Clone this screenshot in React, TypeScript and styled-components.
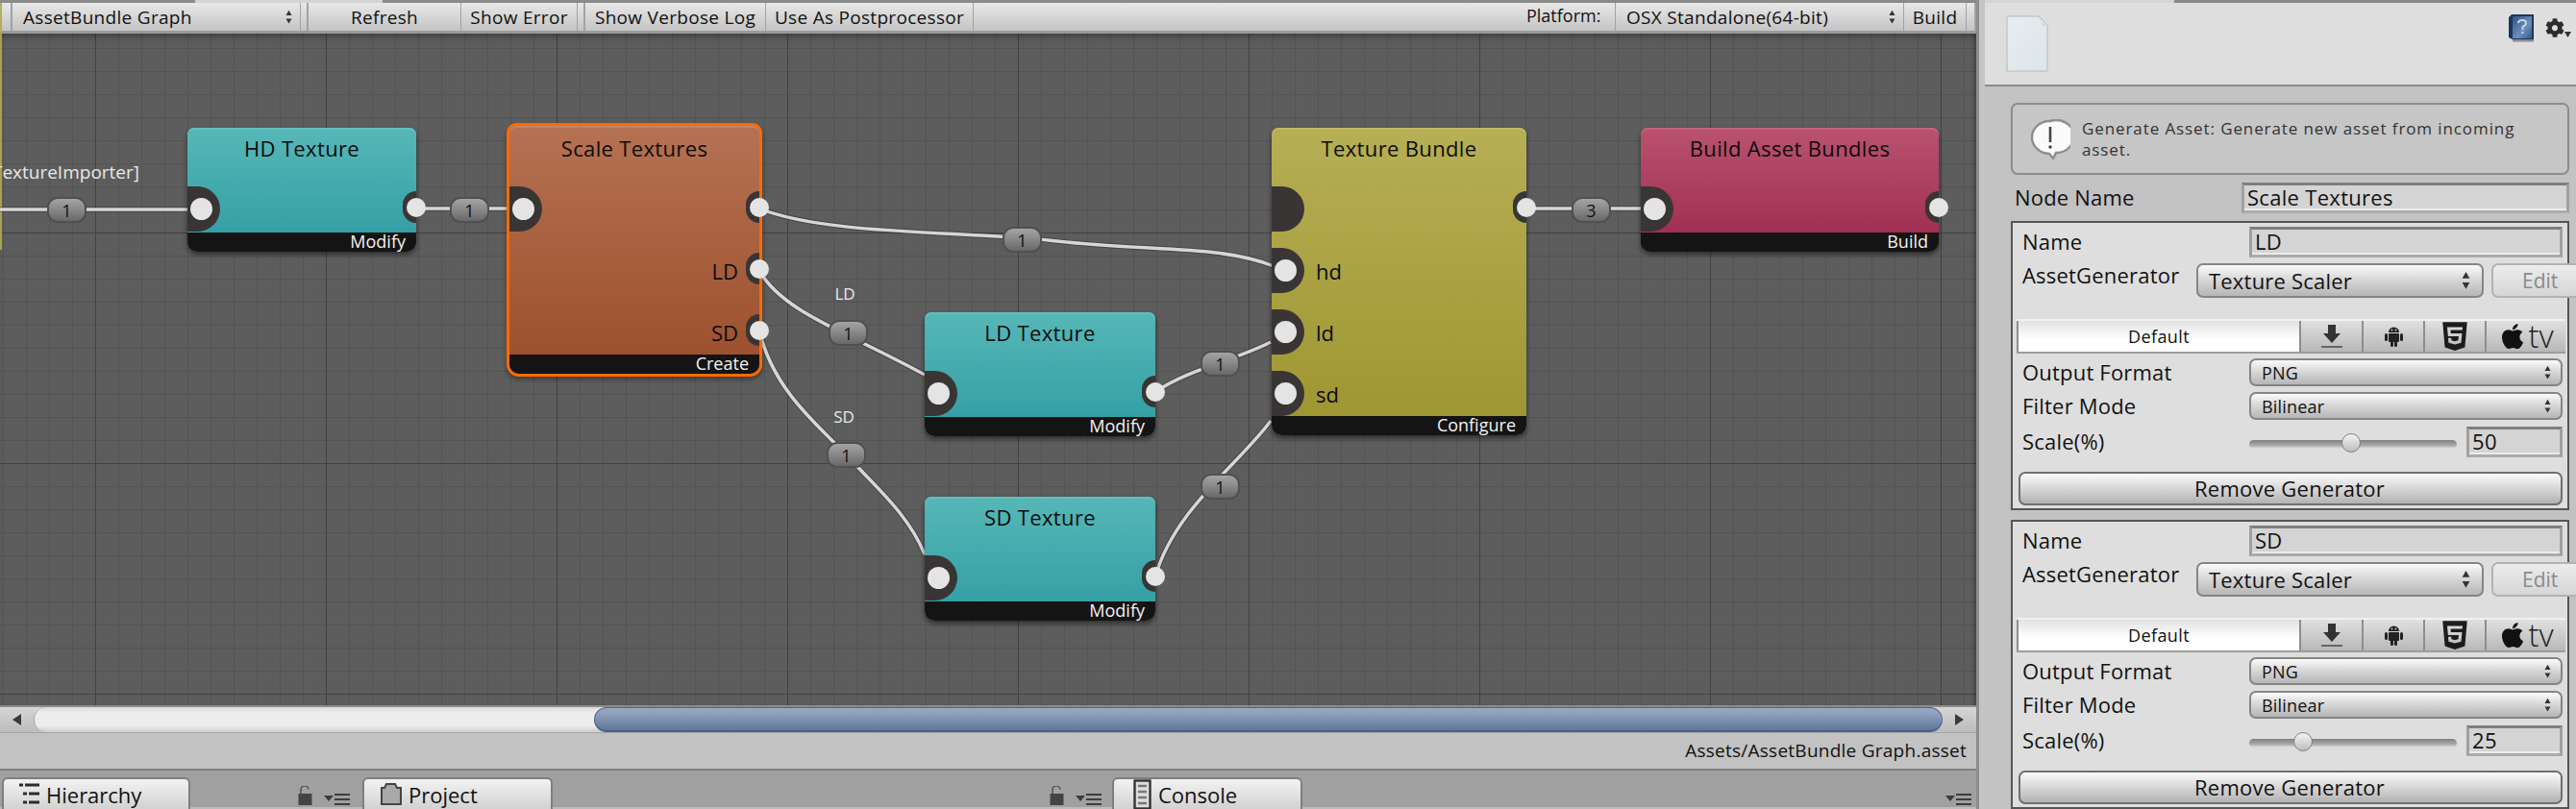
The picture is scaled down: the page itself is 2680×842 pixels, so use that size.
import React from "react";
import styled, { createGlobalStyle } from "styled-components";
import { FaApple, FaCog, FaHtml5 } from "react-icons/fa";

const FONT = `"Open Sans", "Noto Sans", "DejaVu Sans", sans-serif`;

const GlobalStyle = createGlobalStyle`
  html, body {
    margin: 0;
    width: 2680px;
    height: 842px;
    overflow: hidden;
    background: #c2c2c2;
    font-family: ${FONT};
    color: #111;
  }
  * { box-sizing: border-box; }
`;

const Page = styled.div`
  display: flex;
  width: 2680px;
  height: 842px;
  overflow: hidden;
`;

const Main = styled.div`
  width: 2056px;
  height: 842px;
  flex: none;
  display: flex;
  flex-direction: column;
`;

const Gutter = styled.div`
  width: 9px;
  flex: none;
  background: #c4c4c4;
  border-left: 3px solid #8c8c8c;
`;

const TopStrip = styled.div`
  height: 3px;
  flex: none;
  background: #8a8a8a;
  padding-left: ${(p) => p.$tabLeft}px;
  & > div {
    width: ${(p) => p.$tabWidth}px;
    height: 3px;
    background: #d4d4d4;
  }
`;

/* toolbar */
const Toolbar = styled.div`
  height: 32px;
  flex: none;
  display: flex;
  background: linear-gradient(#e8e8e8, #c4c4c4);
  border-bottom: 3px solid #9a9a9a;
  border-left: 2px solid #b3ad62;
  font-size: 19px;
  letter-spacing: 0.3px;
`;

const ToolItem = styled.div`
  width: ${(p) => p.$w}px;
  flex: none;
  display: flex;
  align-items: center;
  justify-content: ${(p) => (p.$left ? "space-between" : "center")};
  padding: ${(p) => (p.$left ? "0 8px 0 11px" : "0")};
  border-right: 1px solid #a2a2a2;
  white-space: nowrap;
`;

const ToolSpacer = styled.div`
  width: ${(p) => p.$w}px;
  flex: none;
  border-right: 2px solid #a2a2a2;
`;

const ToolFill = styled.div`
  flex: 1;
`;

const ToolLabel = styled.div`
  width: 93px;
  flex: none;
  border-right: 1px solid #a2a2a2;
  padding-bottom: 4px;
  display: flex;
  align-items: center;
  letter-spacing: 0;
  font-size: 18px;
`;

/* graph canvas */
const Canvas = styled.div`
  position: relative;
  flex: 1;
  min-height: 0;
  overflow: hidden;
  background-color: #5d5d5d;
  background-image:
    linear-gradient(to right, #414141 1px, transparent 1px),
    linear-gradient(to bottom, #414141 1px, transparent 1px),
    linear-gradient(to right, #545454 1px, transparent 1px),
    linear-gradient(to bottom, #545454 1px, transparent 1px);
  background-size: 240px 100%, 100% 240px, 24px 100%, 100% 24px;
  background-position: 99px 0, 0 207px, 3px 0, 0 15px;
  box-shadow: inset 0 9px 8px -7px rgba(0, 0, 0, 0.4), inset -5px 0 5px -4px rgba(0, 0, 0, 0.4);
  &::before {
    content: "";
    position: absolute;
    left: 0;
    top: 0;
    width: 2px;
    height: 225px;
    background: #a9a34a;
  }
`;

const EdgeLayer = styled.svg`
  position: absolute;
  left: 0;
  top: -35px;
  width: 2056px;
  height: 734px;
`;

const Pill = styled.div`
  position: absolute;
  left: ${(p) => p.$x - 20}px;
  top: ${(p) => p.$y - 35 - 13}px;
  width: 41px;
  height: 27px;
  border-radius: 11px;
  border: 2px solid #505050;
  background: linear-gradient(#a4a4a4, #8a8a8a 45%, #686868);
  display: flex;
  align-items: center;
  justify-content: center;
  font-size: 18px;
  color: #111;
`;

const EdgeLabel = styled.div`
  position: absolute;
  left: ${(p) => p.$x}px;
  top: ${(p) => p.$y - 35 - 12}px;
  height: 24px;
  line-height: 24px;
  transform: translateX(${(p) => (p.$end ? "-100%" : "-50%")});
  font-size: ${(p) => (p.$end ? 19 : 17)}px;
  color: #e8e8e8;
  white-space: nowrap;
`;

const COLORS = {
  teal: ["#57b7b7", "#2e9ca2", "#5fc0c0"],
  orange: ["#b57253", "#9b4e2b", "#c08468"],
  olive: ["#b6af54", "#9e9430", "#c0b960"],
  pink: ["#b9526f", "#9d2a4f", "#c4627e"],
};

const Node = styled.div`
  position: absolute;
  left: ${(p) => p.$x}px;
  top: ${(p) => p.$y - 35}px;
  width: ${(p) => p.$w}px;
  height: ${(p) => p.$h}px;
  display: flex;
  flex-direction: column;
  border-radius: 7px 7px 10px 10px;
  background: linear-gradient(${(p) => COLORS[p.$color][0]}, ${(p) => COLORS[p.$color][1]});
  box-shadow: ${(p) => (p.$selected ? "0 0 0 3px #ff6a00, 0 3px 5px 3px rgba(0, 0, 0, 0.35)" : "0 3px 5px rgba(0, 0, 0, 0.5)")},
    inset 0 2px 0 ${(p) => COLORS[p.$color][2]};
`;

const NodeTitle = styled.div`
  height: 42px;
  margin-top: ${(p) => (p.$selected ? 2 : 0)}px;
  flex: none;
  display: flex;
  align-items: center;
  justify-content: center;
  font-size: 22px;
  letter-spacing: 0.35px;
  color: #0c0c0c;
  white-space: nowrap;
`;

const NodeBody = styled.div`
  flex: 1;
`;

const NodeFooter = styled.div`
  height: 20px;
  flex: none;
  background: #141414;
  border-radius: 0 0 10px 10px;
  color: #f2f2f2;
  font-size: 18px;
  line-height: 19px;
  text-align: right;
  padding-right: 11px;
`;

const InPort = styled.div`
  position: absolute;
  left: 0;
  top: ${(p) => p.$y - 23}px;
  width: 34px;
  height: 47px;
  background: #3a3535;
  border-radius: 0 24px 24px 0 / 0 24px 24px 0;
  display: flex;
  align-items: center;
  padding-left: 3px;
`;

const InDot = styled.div`
  width: 23px;
  height: 23px;
  border-radius: 50%;
  background: #e4e4e4;
`;

const OutPort = styled.div`
  position: absolute;
  left: 100%;
  top: ${(p) => p.$y}px;
  width: 0;
  height: 0;
  &::before {
    content: "";
    position: absolute;
    right: 0;
    top: -17px;
    width: 14px;
    height: 33px;
    background: #3a3535;
    border-radius: 17px 0 0 17px;
  }
  &::after {
    content: "";
    position: absolute;
    left: -10px;
    top: -10px;
    width: 20px;
    height: 20px;
    border-radius: 50%;
    background: #e4e4e4;
  }
`;

const PortLabel = styled.div`
  position: absolute;
  top: ${(p) => p.$y - 13}px;
  ${(p) => (p.$right ? "right: 22px;" : "left: 46px;")}
  height: 24px;
  line-height: 24px;
  font-size: 22px;
  color: #0c0c0c;
`;

/* scrollbar, status, tabs */
const ScrollBar = styled.div`
  height: 29px;
  flex: none;
  display: flex;
  background: linear-gradient(#d6d6d6, #bcbcbc);
  border-top: 2px solid #8c8c8c;
  border-bottom: 1px solid #a6a6a6;
`;

const ScrollArrow = styled.div`
  width: 35px;
  flex: none;
  display: flex;
  align-items: center;
  justify-content: center;
`;

const Triangle = styled.div`
  width: 0;
  height: 0;
  border-top: 6px solid transparent;
  border-bottom: 6px solid transparent;
  ${(p) => (p.$left ? "border-right: 9px solid #3a3a3a;" : "border-left: 9px solid #3a3a3a;")}
`;

const ScrollTrack = styled.div`
  flex: 1;
  display: flex;
  padding-left: 582px;
  border-radius: 13px;
  background: linear-gradient(#dcdcdc, #eeeeee 25%, #ececec 75%, #cfcfcf);
  border-left: 1px solid #a8a8a8;
`;

const ScrollThumb = styled.div`
  flex: 1;
  border-radius: 13px;
  background: linear-gradient(#98a8c4, #8d9ebb 30%, #5f7699);
  border: 1px solid #4a6288;
  border-bottom-width: 2px;
`;

const StatusBar = styled.div`
  height: 39px;
  flex: none;
  display: flex;
  align-items: center;
  justify-content: flex-end;
  padding: 0 10px 2px 0;
  background: #c2c2c2;
  border-bottom: 2px solid #808080;
  font-size: 19px;
  letter-spacing: 0.25px;
`;

const TabBar = styled.div`
  height: 40px;
  flex: none;
  display: flex;
  padding-top: 7px;
  background: #a0a0a0;
  box-shadow: inset 0 -2px 0 #bcbcbc;
`;

const TabGroup = styled.div`
  width: ${(p) => p.$w}px;
  flex: none;
  display: flex;
  align-items: flex-end;
  padding-left: ${(p) => p.$pad}px;
`;

const Tab = styled.div`
  width: ${(p) => p.$w}px;
  height: 33px;
  flex: none;
  display: flex;
  align-items: center;
  gap: 6px;
  padding-left: ${(p) => p.$pad}px;
  font-size: 22px;
  border: 2px solid #7f7f7f;
  border-bottom: none;
  border-radius: 6px 6px 0 0;
  background: linear-gradient(#f2f2f2, #d2d2d2);
`;

const TabTools = styled.div`
  margin-left: auto;
  margin-right: ${(p) => p.$right}px;
  height: 100%;
  display: flex;
  align-items: flex-end;
  gap: 12px;
  padding-bottom: 4px;
`;

/* inspector */
const Inspector = styled.div`
  width: 615px;
  flex: none;
  background: #c2c2c2;
  display: flex;
  flex-direction: column;
`;

const InspectorHeader = styled.div`
  height: 87px;
  flex: none;
  display: flex;
  justify-content: space-between;
  padding: 12px 5px 0 22px;
  background: #dedede;
  border-bottom: 2px solid #8a8a8a;
`;

const HeaderTools = styled.div`
  display: flex;
  gap: 11px;
`;

const GearWrap = styled.div`
  display: flex;
  align-items: flex-end;
  height: 22px;
  margin-top: 2px;
`;

const InspectorBody = styled.div`
  padding: 17px 7px 0 27px;
`;

const HelpBox = styled.div`
  height: 75px;
  display: flex;
  align-items: center;
  gap: 12px;
  padding: 0 14px 0 18px;
  border: 2px solid #8c8c8c;
  border-radius: 7px;
  background: #c6c6c6;
`;

const HelpText = styled.div`
  font-size: 17px;
  line-height: 22px;
  letter-spacing: 0.9px;
  color: #333;
`;

const Row = styled.div`
  display: flex;
  align-items: center;
  height: ${(p) => p.$h}px;
  margin-top: ${(p) => p.$mt}px;
  padding: ${(p) => p.$pad ?? "0 5px 0 10px"};
`;

const FieldLabel = styled.div`
  width: ${(p) => p.$w}px;
  flex: none;
  font-size: 22px;
  letter-spacing: 0.2px;
  color: #111;
  white-space: nowrap;
  padding-bottom: ${(p) => p.$raise ?? 2}px;
`;

const TextField = styled.div`
  flex: 1;
  height: 100%;
  display: flex;
  align-items: center;
  padding: 0 0 2px 3px;
  font-size: 22px;
  letter-spacing: 0.3px;
  background: #d4d4d4;
  border: 3px solid #7e7e7e;
  border-left-color: #a0a0a0;
  border-right-color: #a0a0a0;
  border-bottom-color: #ababab;
  box-shadow: inset 0 -2px 0 #ececec;
`;

const Group = styled.div`
  margin-top: ${(p) => p.$mt}px;
  border: 2px solid #555;
  background: #dedede;
  height: 301px;
  flex: none;
`;

const Popup = styled.div`
  width: ${(p) => p.$w ?? 326}px;
  height: 100%;
  flex: none;
  display: flex;
  align-items: center;
  justify-content: space-between;
  padding: 0 ${(p) => (p.$big ? 12 : 10)}px 0 11px;
  font-size: ${(p) => (p.$big ? 22 : 18)}px;
  letter-spacing: 0.2px;
  border: 2px solid #858585;
  border-radius: 7px;
  background: linear-gradient(#fbfbfb, #dcdcdc 40%, #b6b6b6);
`;

const EditButton = styled.div`
  width: 96px;
  height: 100%;
  flex: none;
  margin-left: 8px;
  padding-left: 30px;
  display: flex;
  align-items: center;
  font-size: 21px;
  color: #8a8a8a;
  border: 2px solid #b2b2b2;
  border-radius: 7px;
  background: linear-gradient(#ececec, #d6d6d6);
`;

const PlatformTabs = styled.div`
  height: 36px;
  margin: 22px 2px 0 4px;
  display: flex;
  border-top: 2px solid #f1f1f1;
  border-bottom: 2px solid #9c9c9c;
`;

const PlatformTab = styled.div`
  width: ${(p) => p.$w}px;
  flex: ${(p) => (p.$active ? "1" : "none")};
  display: flex;
  align-items: center;
  justify-content: center;
  gap: 1px;
  overflow: hidden;
  font-size: 18px;
  letter-spacing: 0.4px;
  color: #111;
  border-left: 2px solid #8e8e8e;
  background: ${(p) => (p.$active ? "linear-gradient(#e2e2e2, #ffffff 60%)" : "linear-gradient(#e0e0e0, #b8b8b8)")};
`;

const TvText = styled.span`
  font-size: 33px;
  font-weight: 300;
  line-height: 30px;
  letter-spacing: 0;
  color: #222;
`;

const SliderArea = styled.div`
  position: relative;
  width: 216px;
  height: 100%;
  flex: none;
  display: flex;
  align-items: center;
`;

const SliderTrack = styled.div`
  width: 100%;
  height: 9px;
  margin-top: 4px;
  border-radius: 5px;
  background: linear-gradient(#808080, #a8a8a8 60%, #e2e2e2);
`;

const SliderThumb = styled.div`
  position: absolute;
  top: 7px;
  width: 20px;
  height: 20px;
  margin-left: -10px;
  border-radius: 50%;
  border: 1px solid #7f7f7f;
  background: linear-gradient(#f4f4f4, #bdbdbd);
`;

const ValueField = styled(TextField)`
  flex: none;
  width: 100px;
  margin-left: 10px;
`;

const RemoveButton = styled.div`
  height: 35px;
  margin: 15px 5px 0 6px;
  display: flex;
  align-items: center;
  justify-content: center;
  padding: 0 2px 2px 0;
  font-size: 22px;
  letter-spacing: 0.25px;
  border: 2px solid #6f6f6f;
  border-radius: 7px;
  background: linear-gradient(#fbfbfb, #dedede 40%, #b2b2b2);
`;

/* little drawings */
const UpDown = ({ size = 8 }: { size?: number }) => (
  <svg width={size} height={size * 2.2} viewBox="0 0 8 18" style={{ flex: "none" }}>
    <path d="M4 1 L7.5 7 H0.5 Z M4 17 L7.5 11 H0.5 Z" fill="#333" />
  </svg>
);

const LockIcon = () => (
  <svg width="15" height="20" viewBox="0 0 15 20">
    <path d="M3 8 V4.5 A4 4 0 0 1 11 3.5" fill="none" stroke="#555" strokeWidth="1.6" />
    <rect x="0.5" y="8" width="14" height="12" fill="#444" />
  </svg>
);

const MenuIcon = () => (
  <svg width="28" height="12" viewBox="0 0 28 12">
    <path d="M0 2 H10 L5 8 Z" fill="#3c3c3c" />
    <path d="M11 1 H27 M11 6 H27 M11 11 H27" stroke="#3c3c3c" strokeWidth="2" />
  </svg>
);

const HierarchyIcon = () => (
  <svg width="22" height="24" viewBox="0 0 22 24">
    <path d="M0 2 H4 M6 2 H21 M4 11 H8 M10 11 H21 M4 20 H8 M10 20 H21" stroke="#2c2c2c" strokeWidth="3" />
  </svg>
);

const FolderIcon = () => (
  <svg width="24" height="24" viewBox="0 0 24 24">
    <path d="M2 22 V5 H5 L7 1 H16 L18 5 H22 V22 Z" fill="#a9a9a9" stroke="#444" strokeWidth="2" />
  </svg>
);

const ConsoleIcon = () => (
  <svg width="20" height="32" viewBox="0 0 20 32">
    <rect x="1.5" y="1.5" width="16" height="29" fill="#ddd" stroke="#333" strokeWidth="2.4" />
    <path d="M5 7 H14 M5 13 H14 M5 19 H14 M5 25 H14" stroke="#777" strokeWidth="2.4" />
  </svg>
);

const DownloadIcon = () => (
  <svg width="22" height="24" viewBox="0 0 22 24">
    <path d="M7 0 H15 V9 H20 L11 19 L2 9 H7 Z" fill="#333" />
    <rect x="0" y="22" width="22" height="2" fill="#666" />
  </svg>
);

const AndroidIcon = () => (
  <svg width="19" height="22" viewBox="0 0 19 22">
    <path d="M4 7 A5.5 5.5 0 0 1 15 7 Z" fill="#222" />
    <rect x="4" y="8" width="11" height="9" rx="1" fill="#222" />
    <rect x="0" y="8" width="3" height="8" rx="1.5" fill="#222" />
    <rect x="16" y="8" width="3" height="8" rx="1.5" fill="#222" />
    <rect x="6" y="16" width="3" height="6" rx="1.5" fill="#222" />
    <rect x="10" y="16" width="3" height="6" rx="1.5" fill="#222" />
    <circle cx="7.5" cy="4.5" r="0.9" fill="#ccc" />
    <circle cx="11.5" cy="4.5" r="0.9" fill="#ccc" />
  </svg>
);

const FileIcon = () => (
  <svg width="44" height="60" viewBox="0 0 44 60" style={{ marginTop: 1 }}>
    <defs>
      <linearGradient id="fileFill" x1="0" y1="0" x2="1" y2="1">
        <stop offset="0" stopColor="#e8edef" />
        <stop offset="1" stopColor="#dbe5ea" />
      </linearGradient>
    </defs>
    <path d="M1 1 H34 L43 10 V58 H1 Z" fill="url(#fileFill)" stroke="#b4babd" />
    <path d="M34 1 Q36 9 43 12 L38 10 Z" fill="#bbb" />
  </svg>
);

const HelpBook = () => (
  <svg width="27" height="29" viewBox="0 0 27 29">
    <defs>
      <linearGradient id="bookFill" x1="0" y1="0" x2="1" y2="1">
        <stop offset="0" stopColor="#2f5488" />
        <stop offset="0.6" stopColor="#6d8fbc" />
        <stop offset="1" stopColor="#34568a" />
      </linearGradient>
    </defs>
    <path d="M0 3 L3 0 H26 V26 H4 L0 24 Z" fill="#1f3556" />
    <rect x="4" y="2" width="20" height="23" fill="url(#bookFill)" />
    <path d="M10 9 Q10 6 14 6 Q18 6 18 9 Q18 11 14.5 13 V16 M14.5 18 V20" fill="none" stroke="#c7d4e6" strokeWidth="2" />
    <rect x="4" y="26" width="22" height="2.5" fill="#8c8c8c" />
  </svg>
);

const HelpBubble = () => (
  <svg width="42" height="42" viewBox="0 0 42 42" style={{ flex: "none" }}>
    <path d="M21 2 A18.5 17 0 1 1 27 35 L24 41 L20 36 A18.5 17 0 0 1 21 2 Z" fill="#fafafa" stroke="#8e8e8e" strokeWidth="2.4" />
    <path d="M21 8 V24" stroke="#444" strokeWidth="2.6" />
    <circle cx="21" cy="29" r="1.7" fill="#444" />
  </svg>
);

const GEN = [
  { name: "LD", value: 50, mt: 8 },
  { name: "SD", value: 25, mt: 10 },
];

const Generator = ({ name, value, mt }: { name: string; value: number; mt: number }) => (
  <Group $mt={mt}>
    <Row $h={32} $mt={4}>
      <FieldLabel $w={236}>Name</FieldLabel>
      <TextField>{name}</TextField>
    </Row>
    <Row $h={36} $mt={6} $pad="0 0 0 10px">
      <FieldLabel $w={181} $raise={12}>AssetGenerator</FieldLabel>
      <Popup $w={299} $big>
        Texture Scaler
        <UpDown size={9} />
      </Popup>
      <EditButton>Edit</EditButton>
    </Row>
    <PlatformTabs>
      <PlatformTab $active>Default</PlatformTab>
      <PlatformTab $w={65}><DownloadIcon /></PlatformTab>
      <PlatformTab $w={64}><AndroidIcon /></PlatformTab>
      <PlatformTab $w={64}><FaHtml5 size={34} color="#1c1c1c" /></PlatformTab>
      <PlatformTab $w={84}>
        <FaApple size={30} color="#111" />
        <TvText>tv</TvText>
      </PlatformTab>
    </PlatformTabs>
    <Row $h={29} $mt={5}>
      <FieldLabel $w={236}>Output Format</FieldLabel>
      <Popup>PNG<UpDown size={7} /></Popup>
    </Row>
    <Row $h={29} $mt={6}>
      <FieldLabel $w={236}>Filter Mode</FieldLabel>
      <Popup>Bilinear<UpDown size={7} /></Popup>
    </Row>
    <Row $h={32} $mt={7}>
      <FieldLabel $w={236}>Scale(%)</FieldLabel>
      <SliderArea>
        <SliderTrack />
        <SliderThumb style={{ left: 5 + value * 2.02 }} />
      </SliderArea>
      <ValueField>{value}</ValueField>
    </Row>
    <RemoveButton>Remove Generator</RemoveButton>
  </Group>
);

const EDGES = [
  "M0 218 H195",
  "M433 217 H530",
  "M1588 217 H1707",
  "M790 217 C860 245 1000 240 1100 251 S1270 255 1325 277",
  "M790 282 C815 325 880 345 962 390",
  "M790 344 C805 410 860 450 885 478 S945 535 962 577",
  "M1202 408 C1235 385 1285 375 1322 356",
  "M1202 600 C1222 530 1290 482 1322 438",
];

const PILLS = [
  { x: 69, y: 218, n: 1 },
  { x: 488, y: 218, n: 1 },
  { x: 1063, y: 249, n: 1 },
  { x: 882, y: 346, n: 1 },
  { x: 880, y: 473, n: 1 },
  { x: 1269, y: 378, n: 1 },
  { x: 1269, y: 506, n: 1 },
  { x: 1655, y: 218, n: 3 },
];

export default function App() {
  return (
    <Page>
      <GlobalStyle />
      <Main>
        <TopStrip $tabLeft={203} $tabWidth={195}><div /></TopStrip>
        <Toolbar>
          <ToolSpacer $w={11} />
          <ToolItem $w={300} $left>AssetBundle Graph<UpDown size={7} /></ToolItem>
          <ToolSpacer $w={8} />
          <ToolItem $w={159}>Refresh</ToolItem>
          <ToolItem $w={121}>Show Error</ToolItem>
          <ToolSpacer $w={8} />
          <ToolItem $w={188}>Show Verbose Log</ToolItem>
          <ToolItem $w={216}>Use As Postprocessor</ToolItem>
          <ToolFill />
          <ToolLabel>Platform:</ToolLabel>
          <ToolItem $w={300} $left>OSX Standalone(64-bit)<UpDown size={7} /></ToolItem>
          <ToolItem $w={65}>Build</ToolItem>
          <ToolSpacer $w={10} />
        </Toolbar>
        <Canvas>
          <EdgeLayer viewBox="0 0 2056 734">
            {EDGES.map((d) => (
              <g key={d} fill="none">
                <path d={d} stroke="rgba(40,40,40,0.45)" strokeWidth="5.5" />
                <path d={d} stroke="#d6d6d6" strokeWidth="3.5" />
              </g>
            ))}
          </EdgeLayer>
          <EdgeLabel $x={145} $y={179} $end>[TextureImporter]</EdgeLabel>
          <EdgeLabel $x={879} $y={306}>LD</EdgeLabel>
          <EdgeLabel $x={878} $y={434}>SD</EdgeLabel>

          <Node $x={195} $y={133} $w={238} $h={129} $color="teal">
            <NodeTitle>HD Texture</NodeTitle>
            <NodeBody />
            <NodeFooter>Modify</NodeFooter>
            <InPort $y={84}><InDot /></InPort>
            <OutPort $y={83} />
          </Node>

          <Node $x={530} $y={131} $w={260} $h={258} $color="orange" $selected>
            <NodeTitle $selected>Scale Textures</NodeTitle>
            <NodeBody />
            <NodeFooter>Create</NodeFooter>
            <InPort $y={86}><InDot /></InPort>
            <OutPort $y={85} />
            <PortLabel $right $y={152}>LD</PortLabel>
            <OutPort $y={149} />
            <PortLabel $right $y={216}>SD</PortLabel>
            <OutPort $y={213} />
          </Node>

          <Node $x={962} $y={325} $w={240} $h={129} $color="teal">
            <NodeTitle>LD Texture</NodeTitle>
            <NodeBody />
            <NodeFooter>Modify</NodeFooter>
            <InPort $y={84}><InDot /></InPort>
            <OutPort $y={83} />
          </Node>

          <Node $x={962} $y={517} $w={240} $h={129} $color="teal">
            <NodeTitle>SD Texture</NodeTitle>
            <NodeBody />
            <NodeFooter>Modify</NodeFooter>
            <InPort $y={84}><InDot /></InPort>
            <OutPort $y={83} />
          </Node>

          <Node $x={1323} $y={133} $w={265} $h={320} $color="olive">
            <NodeTitle>Texture Bundle</NodeTitle>
            <NodeBody />
            <NodeFooter>Configure</NodeFooter>
            <InPort $y={84} />
            <InPort $y={148}><InDot /></InPort>
            <PortLabel $y={150}>hd</PortLabel>
            <InPort $y={212}><InDot /></InPort>
            <PortLabel $y={214}>ld</PortLabel>
            <InPort $y={276}><InDot /></InPort>
            <PortLabel $y={278}>sd</PortLabel>
            <OutPort $y={83} />
          </Node>

          <Node $x={1707} $y={133} $w={310} $h={129} $color="pink">
            <NodeTitle>Build Asset Bundles</NodeTitle>
            <NodeBody />
            <NodeFooter>Build</NodeFooter>
            <InPort $y={84}><InDot /></InPort>
            <OutPort $y={83} />
          </Node>

          {PILLS.map((pill) => (
            <Pill key={`${pill.x}-${pill.y}`} $x={pill.x} $y={pill.y}>{pill.n}</Pill>
          ))}
        </Canvas>
        <ScrollBar>
          <ScrollArrow><Triangle $left /></ScrollArrow>
          <ScrollTrack><ScrollThumb /></ScrollTrack>
          <ScrollArrow><Triangle /></ScrollArrow>
        </ScrollBar>
        <StatusBar>Assets/AssetBundle Graph.asset</StatusBar>
        <TabBar>
          <TabGroup $w={377} $pad={2}>
            <Tab $w={196} $pad={16}><HierarchyIcon />Hierarchy</Tab>
            <TabTools $right={12}><LockIcon /><MenuIcon /></TabTools>
          </TabGroup>
          <TabGroup $w={780} $pad={0}>
            <Tab $w={198} $pad={16}><FolderIcon />Project</Tab>
            <TabTools $right={10}><LockIcon /><MenuIcon /></TabTools>
          </TabGroup>
          <TabGroup $w={899} $pad={0}>
            <Tab $w={198} $pad={20}><ConsoleIcon />Console</Tab>
            <TabTools $right={4}><MenuIcon /></TabTools>
          </TabGroup>
        </TabBar>
      </Main>
      <Gutter />
      <Inspector>
        <TopStrip $tabLeft={0} $tabWidth={197}><div /></TopStrip>
        <InspectorHeader>
          <FileIcon />
          <HeaderTools>
            <HelpBook />
            <GearWrap>
              <FaCog size={20} color="#2c2c2c" />
              <svg width="7" height="6" viewBox="0 0 7 6"><path d="M0 0 H7 L3.5 6 Z" fill="#333" /></svg>
            </GearWrap>
          </HeaderTools>
        </InspectorHeader>
        <InspectorBody>
          <HelpBox>
            <HelpBubble />
            <HelpText>Generate Asset: Generate new asset from incoming asset.</HelpText>
          </HelpBox>
          <Row $h={32} $mt={8} $pad="0 0 0 4px">
            <FieldLabel $w={236}>Node Name</FieldLabel>
            <TextField>Scale Textures</TextField>
          </Row>
          {GEN.map((g) => (
            <Generator key={g.name} name={g.name} value={g.value} mt={g.mt} />
          ))}
        </InspectorBody>
      </Inspector>
    </Page>
  );
}
